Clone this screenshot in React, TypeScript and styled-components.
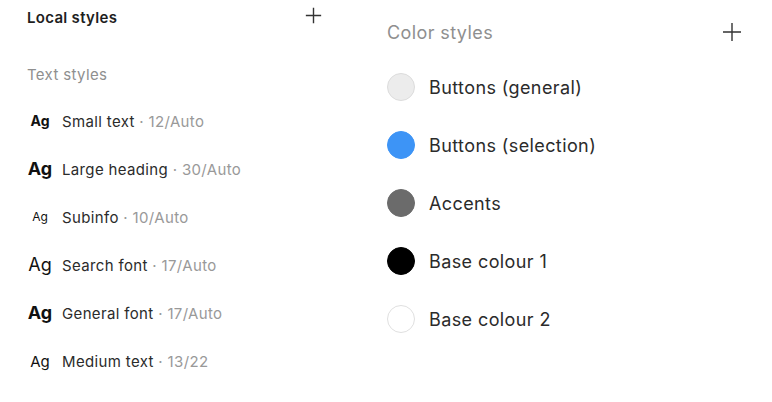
import React from "react";
import styled, { createGlobalStyle } from "styled-components";

const Global = createGlobalStyle`
  html, body { margin: 0; padding: 0; background: #fff; }
  body { font-family: Inter, "Noto Sans", sans-serif; color: #2b2b2b; }
`;

const Page = styled.div`
  display: flex;
  width: 772px;
  height: 402px;
  background: #fff;
`;

const LeftPanel = styled.section`
  width: 360px;
  box-sizing: border-box;
  padding: 5px 38px 0 27px;
  display: flex;
  flex-direction: column;
`;

const RightPanel = styled.section`
  flex: 1;
  box-sizing: border-box;
  padding: 18px 30px 0 27px;
  display: flex;
  flex-direction: column;
`;

const HeaderRow = styled.div<{ $h: number }>`
  display: flex;
  align-items: center;
  justify-content: space-between;
  height: ${(p) => p.$h}px;
`;

const Title = styled.h2`
  margin: 0;
  font-size: 15px;
  font-weight: 600;
  letter-spacing: 0.3px;
  color: #1e1e1e;
`;

const SectionLabel = styled.div<{ $size: number; $spacing: number }>`
  font-size: ${(p) => p.$size}px;
  letter-spacing: ${(p) => p.$spacing}px;
  color: #8f8f8f;
`;

const IconWrap = styled.span<{ $lift: number }>`
  display: flex;
  margin-bottom: ${(p) => p.$lift}px;
`;

const PlusIcon = ({ size, lift }: { size: number; lift: number }) => (
  <IconWrap $lift={lift}>
    <svg width={size} height={size} viewBox="0 0 20 20" fill="none">
      <path d="M10 1v18M1 10h18" stroke="#333" strokeWidth={(20 / size) * 1.4} />
    </svg>
  </IconWrap>
);

const SubHeader = styled.div`
  margin-top: 33px;
  height: 24px;
  display: flex;
  align-items: center;
`;

const TextList = styled.div`
  margin-top: 11px;
  display: flex;
  flex-direction: column;
`;

const TextRow = styled.div`
  height: 48px;
  display: flex;
  align-items: center;
  gap: 9px;
`;

const AgBox = styled.span<{ $size: number; $bold: boolean }>`
  width: 26px;
  text-align: center;
  font-size: ${(p) => p.$size}px;
  font-weight: ${(p) => (p.$bold ? 700 : 400)};
  color: #111;
  line-height: 1;
`;

const RowName = styled.span`
  font-size: 15px;
  letter-spacing: 0.35px;
  color: #2b2b2b;
`;

const RowMeta = styled.span`
  color: #999;
`;

const ColorList = styled.div`
  margin-top: 12px;
  display: flex;
  flex-direction: column;
`;

const ColorRow = styled.div`
  height: 58px;
  display: flex;
  align-items: center;
  gap: 14px;
`;

const Swatch = styled.span<{ $color: string; $border: string }>`
  width: 28px;
  height: 28px;
  border-radius: 50%;
  box-sizing: border-box;
  background: ${(p) => p.$color};
  border: 1px solid ${(p) => p.$border};
`;

const ColorName = styled.span`
  font-size: 18px;
  letter-spacing: 0.4px;
  color: #2b2b2b;
`;

const textStyles = [
  { name: "Small text", meta: "12/Auto", size: 14, bold: true },
  { name: "Large heading", meta: "30/Auto", size: 18, bold: true },
  { name: "Subinfo", meta: "10/Auto", size: 12, bold: false },
  { name: "Search font", meta: "17/Auto", size: 18, bold: false },
  { name: "General font", meta: "17/Auto", size: 18, bold: true },
  { name: "Medium text", meta: "13/22", size: 15, bold: false },
];

const colorStyles = [
  { name: "Buttons (general)", color: "#ececec", border: "#dcdcdc" },
  { name: "Buttons (selection)", color: "#3d94f6", border: "#3d94f6" },
  { name: "Accents", color: "#6b6b6b", border: "#6b6b6b" },
  { name: "Base colour 1", color: "#000", border: "#000" },
  { name: "Base colour 2", color: "#fff", border: "#e0e0e0" },
];

export default function App() {
  return (
    <Page>
      <Global />
      <LeftPanel>
        <HeaderRow $h={24}>
          <Title>Local styles</Title>
          <PlusIcon size={17} lift={4} />
        </HeaderRow>
        <SubHeader>
          <SectionLabel $size={15} $spacing={0.35}>Text styles</SectionLabel>
        </SubHeader>
        <TextList>
          {textStyles.map((t) => (
            <TextRow key={t.name}>
              <AgBox $size={t.size} $bold={t.bold}>Ag</AgBox>
              <RowName>
                {t.name} <RowMeta>· {t.meta}</RowMeta>
              </RowName>
            </TextRow>
          ))}
        </TextList>
      </LeftPanel>
      <RightPanel>
        <HeaderRow $h={28}>
          <SectionLabel $size={18} $spacing={0.4}>Color styles</SectionLabel>
          <PlusIcon size={20} lift={0} />
        </HeaderRow>
        <ColorList>
          {colorStyles.map((c) => (
            <ColorRow key={c.name}>
              <Swatch $color={c.color} $border={c.border} />
              <ColorName>{c.name}</ColorName>
            </ColorRow>
          ))}
        </ColorList>
      </RightPanel>
    </Page>
  );
}
